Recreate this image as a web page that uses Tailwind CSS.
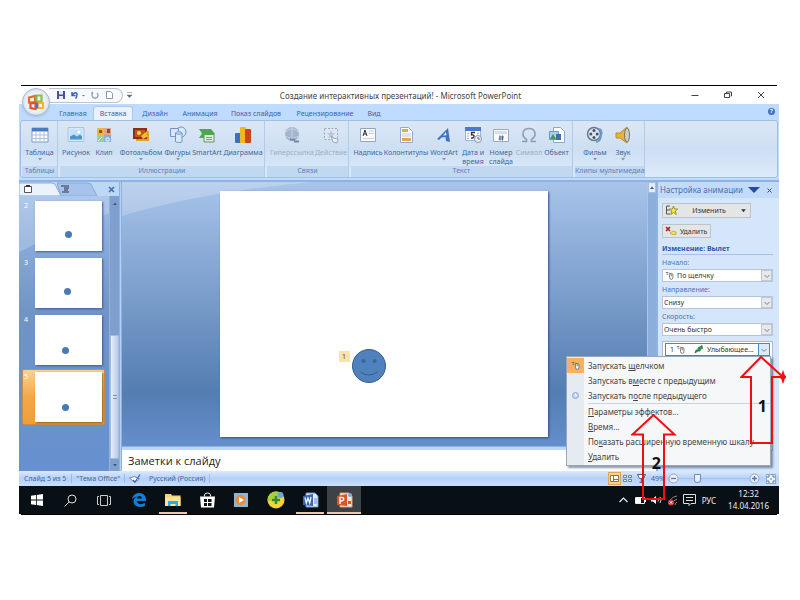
<!DOCTYPE html>
<html lang="ru">
<head>
    <meta charset="UTF-8">
    <meta name="viewport" content="width=device-width, initial-scale=1.0">
    <title>Создание интерактивных презентаций! - Microsoft PowerPoint</title>
    <script src="https://cdn.jsdelivr.net/npm/@tailwindcss/browser@4"></script>
    <style>
        body { font-family: 'Noto Sans', 'Open Sans', sans-serif; }
        .zoom-slider::-webkit-slider-thumb { appearance: none; width: 7px; height: 9px; background: #e8f1fd; border: 1px solid #6d8fc0; border-radius: 1px 1px 4px 4px; }
        .zoom-slider::-webkit-slider-runnable-track { background: linear-gradient(#a3c1ea, #a3c1ea) center / 100% 1px no-repeat; }
    </style>
</head>
<body class="bg-white min-h-screen pt-[85px] pl-[19px] pr-[21px]">

    <svg class="hidden">
        <symbol id="i-mouse" viewBox="0 0 12 10">
            <path d="M1 1.500h3M2 3.500h2M5 2l2 1" stroke="#555" fill="none"/>
            <rect x="5.500" y="2.500" width="4" height="7" rx="1.800" fill="#fff" stroke="#666"/>
            <path d="M7.500 3v3" stroke="#666"/>
        </symbol>
        <symbol id="i-chev" viewBox="0 0 8 8"><path d="M1.500 3l2.500 2.500L6.500 3" fill="none" stroke="#7b828e"/></symbol>
        <symbol id="i-drop" viewBox="0 0 6 4"><path d="M1 1h4L3 3.500z" fill="currentColor"/></symbol>
    </svg>

    <div class="relative text-[7px] leading-[9px]">
        <div class="h-px mx-[2px] bg-black"></div>

        <!-- title bar -->
        <header class="relative flex items-center h-[18px] bg-white">
            <button aria-label="Office" class="absolute left-[3px] top-[2px] z-10 size-[28px] rounded-full border border-[#a9b7cc] bg-radial from-white via-[#eef2f8] to-[#bccbe0] shadow flex items-center justify-center">
                <svg class="size-[22px]" viewBox="0 0 22 22" fill="none" stroke-width="2.200">
                    <path d="M4 6.500l6-1.500v6l-6 .5z" stroke="#e5682c"/>
                    <path d="M11.500 4.500h5v6h-5z" stroke="#8fbb45"/>
                    <path d="M5.500 12.500l5-.5v6l-5-1z" stroke="#d9562b"/>
                    <path d="M13 12h5v5h-5z" stroke="#f2b632"/>
                    <path d="M12 11.500v6" stroke="#3e7cc7"/>
                </svg>
            </button>
            <div class="ml-[30px] w-[74px] h-[15px] flex items-center gap-[9px] pl-[8px] border border-l-0 border-[#b9c3d2] rounded-r-full bg-[#f7f9fc]">
                <svg class="size-[8px]" viewBox="0 0 8 8"><path d="M0 0h8v8H0z" fill="#4552a0"/><path d="M2 0h4v3.500H2zM2 5h4v3H2z" fill="#e6e9f6"/></svg>
                <svg class="w-[14px] h-[8px] -ml-[3px]" viewBox="0 0 14 8"><path d="M1 1v3.500h3.500M1.500 4C3 1 6 1 6 3.500S5 7 4.500 7.500" fill="none" stroke="#3c62b4" stroke-width="1.500"/><path d="M11 4h3l-1.500 1.500z" fill="#777"/></svg>
                <svg class="size-[8px] -ml-[3px]" viewBox="0 0 8 8"><path d="M2 1.500h-1v2.500M2 2a3 3 0 1 0 4 0" fill="none" stroke="#8ea0ba" stroke-width="1.300"/></svg>
                <svg class="w-[7px] h-[8px] -ml-[2px]" viewBox="0 0 7 8"><path d="M.5.500h4L6.500 2.500v5h-6z" fill="#fff" stroke="#8b97ab"/></svg>
            </div>
            <svg class="ml-[4px] w-[5px] h-[6px] text-[#5c6b84]" viewBox="0 0 5 6"><path d="M0 .5h5M0 3h5L2.500 5.500z" fill="currentColor" stroke="currentColor" stroke-width=".5"/></svg>
            <h1 class="grow text-center text-[8px] leading-[10px] text-[#444] pr-[22px] pt-[2px]">Создание интерактивных презентаций! - Microsoft PowerPoint</h1>
            <div class="flex gap-[25px] pr-[14px] text-[#444]">
                <button aria-label="Свернуть"><svg class="size-[8px]" viewBox="0 0 8 8"><path d="M.5 4.500h7" stroke="currentColor"/></svg></button>
                <button aria-label="Развернуть"><svg class="size-[8px]" viewBox="0 0 8 8" fill="none" stroke="currentColor"><path d="M.5 2.500h5v4h-5zM2.500 2V1h5v4h-1"/></svg></button>
                <button aria-label="Закрыть"><svg class="size-[8px]" viewBox="0 0 8 8"><path d="M1 1l6 6M7 1L1 7" stroke="currentColor"/></svg></button>
            </div>
        </header>

        <!-- ribbon tabs -->
        <nav class="flex items-end h-[16px] bg-[#bfdbff] pl-[34px] text-[#4463a0]">
            <button class="w-[40px] h-[14px]">Главная</button>
            <button class="w-[40px] h-[14px] rounded-t-[3px] border border-b-0 border-[#a9c6ee] bg-[#e9f2fd]">Вставка</button>
            <button class="w-[44px] h-[14px]">Дизайн</button>
            <button class="w-[46px] h-[14px]">Анимация</button>
            <button class="w-[66px] h-[14px]">Показ слайдов</button>
            <button class="w-[72px] h-[14px]">Рецензирование</button>
            <button class="w-[26px] h-[14px]">Вид</button>
            <button aria-label="Справка" class="ml-auto mr-[4px] mb-[5px] size-[7px] rounded-full bg-[#3f74c4] text-white text-[6px] leading-[7px] font-bold">?</button>
        </nav>

        <!-- ribbon -->
        <div class="h-[60px] bg-[#bfdbff] px-[1px] pb-[2px]">
            <div class="flex gap-[2px] h-full pl-px rounded-[3px] border border-[#9fbfe8] bg-linear-to-b from-[#dce7f5] via-[#cddff3] to-[#dcebfb] text-[#46659e]">
                <section class="w-[36px] flex flex-col border-r border-[#b3cbe9]">
                    <div class="grow flex">
                        <button class="w-[36px] flex flex-col items-center pt-[5px] whitespace-nowrap">
                            <svg class="size-[18px]" viewBox="0 0 18 18"><path d="M1 2h16v14H1z" fill="#fff" stroke="#7f9ccb"/><path d="M1 2h16v3.500H1z" fill="#4a7ac6"/><path d="M1 9h16M1 12.500h16M5 5v11M9 5v11M13 5v11" stroke="#a9bfe0"/></svg>
                            <span class="mt-[4px]">Таблица</span>
                            <svg class="w-[6px] h-[4px] text-[#7f93b8]"><use href="#i-drop"/></svg>
                        </button>
                    </div>
                    <h2 class="h-[11px] text-center leading-[10px] bg-[#c1d8f1] text-[#5f80b8]">Таблицы</h2>
                </section>
                <section class="w-[205px] flex flex-col border-r border-[#b3cbe9]">
                    <div class="grow flex">
                        <button class="w-[32px] flex flex-col items-center pt-[5px] whitespace-nowrap">
                            <svg class="size-[18px]" viewBox="0 0 18 18"><path d="M1 1.500h16v14H1z" fill="#d5e8fb" stroke="#a9c3e4"/><path d="M3 3.500h12v10H3z" fill="#bfe0f8"/><path d="M3 13.500v-3l4-2 3 2 3-2 2 2v3z" fill="#4a94d0"/><circle cx="12" cy="6" r="1.500" fill="#fff"/></svg>
                            <span class="mt-[4px]">Рисунок</span>
                        </button>
                        <button class="w-[24px] flex flex-col items-center pt-[5px] whitespace-nowrap">
                            <svg class="size-[18px]" viewBox="0 0 18 18"><path d="M2 2h7v7H2z" fill="#f0b638"/><path d="M9 2h7v7H9z" fill="#d9ab8c"/><path d="M2 9h7v7H2z" fill="#9dcf8e"/><path d="M9 9h7v7H9z" fill="#83aee4"/><path d="M4 4h3v3H4zM12 3h3v4h-3z" fill="#9a4a2a"/><path d="M3 15l4-4M11 12h3v3h-3z" stroke="#e9f4ff" fill="none"/></svg>
                            <span class="mt-[4px]">Клип</span>
                        </button>
                        <button class="w-[50px] flex flex-col items-center pt-[5px] whitespace-nowrap">
                            <svg class="size-[18px]" viewBox="0 0 18 18"><path d="M4 5h13v10H4z" fill="#d9a22d"/><path d="M1 2h14v11H1z" fill="#8b2f10"/><path d="M3 4h10v7H3z" fill="#c5541c"/><circle cx="7" cy="7" r="2" fill="#f8dd4a"/><path d="M9 10l6-5v6l-4 2z" fill="#e9bf3a"/></svg>
                            <span class="mt-[4px]">Фотоальбом</span>
                            <svg class="w-[6px] h-[4px] text-[#7f93b8]"><use href="#i-drop"/></svg>
                        </button>
                        <button class="w-[23px] flex flex-col items-center pt-[5px] whitespace-nowrap">
                            <svg class="size-[18px]" viewBox="0 0 18 18" fill="#d9e9fa" stroke="#6b95cc"><circle cx="12" cy="6" r="5"/><path d="M1.500 2.500h8v8h-8z"/><path d="M6.500 7v8.500c0 1.300 6.500 1.300 6.500 0V7z"/><ellipse cx="9.750" cy="7" rx="3.250" ry="1.200"/></svg>
                            <span class="mt-[4px]">Фигуры</span>
                            <svg class="w-[6px] h-[4px] text-[#7f93b8]"><use href="#i-drop"/></svg>
                        </button>
                        <button class="w-[36px] flex flex-col items-center pt-[5px] whitespace-nowrap">
                            <svg class="size-[18px]" viewBox="0 0 18 18"><path d="M1 3h12l4 5-4 4H1l3-4.500z" fill="#4ea650"/><path d="M6 8.500h10v7.500H6z" fill="#dcefd9" stroke="#55a055"/><path d="M8 11.500h6M8 13.500h6" stroke="#6fae6e"/></svg>
                            <span class="mt-[4px]">SmartArt</span>
                        </button>
                        <button class="w-[36px] flex flex-col items-center pt-[5px] whitespace-nowrap">
                            <svg class="size-[18px]" viewBox="0 0 18 18"><rect x="1" y="7" width="6" height="10" rx="1" fill="#3c6fc0"/><rect x="6" y="1" width="6" height="16" rx="1" fill="#f2b824"/><rect x="11" y="3" width="6" height="14" rx="1" fill="#cc4426"/></svg>
                            <span class="mt-[4px]">Диаграмма</span>
                        </button>
                    </div>
                    <h2 class="h-[11px] text-center leading-[10px] bg-[#c1d8f1] text-[#5f80b8]">Иллюстрации</h2>
                </section>
                <section class="w-[82px] flex flex-col border-r border-[#b3cbe9]">
                    <div class="grow flex text-[#a0aec3]">
                        <button class="w-[50px] flex flex-col items-center pt-[5px] whitespace-nowrap">
                            <svg class="size-[18px]" viewBox="0 0 18 18"><circle cx="9" cy="8" r="7" fill="#a3b4cf"/><path d="M3 6c3-4 9-4 12 0M3 10c4 3 8 3 12 0M9 1v13" fill="none" stroke="#c9d5e6"/><path d="M7 13.500h5M11 15.500h5" stroke="#7787a1" stroke-width="2"/></svg>
                            <span class="mt-[4px]">Гиперссылка</span>
                        </button>
                        <button class="w-[28px] flex flex-col items-center pt-[5px] whitespace-nowrap">
                            <svg class="size-[18px]" viewBox="0 0 18 18"><path d="M2.500 2.500h13v11h-13z" fill="#dde6f2" stroke="#9aabc4" stroke-dasharray="2 1.500"/><path d="M9 4l1.200 3 3 .2-2.400 2 .8 3L9 10.500 6.400 12.200l.8-3-2.400-2 3-.2z" fill="#b9c6da"/><path d="M9 10l2 6 4 1 1-4-5-1z" fill="#eef2f8" stroke="#9aabc4"/></svg>
                            <span class="mt-[4px]">Действие</span>
                        </button>
                    </div>
                    <h2 class="h-[11px] text-center leading-[10px] bg-[#c1d8f1] text-[#5f80b8]">Связи</h2>
                </section>
                <section class="w-[222px] flex flex-col border-r border-[#b3cbe9]">
                    <div class="grow flex">
                        <button class="w-[34px] flex flex-col items-center pt-[5px] whitespace-nowrap">
                            <svg class="size-[18px]" viewBox="0 0 18 18"><path d="M1.500 2.500h15v13h-15z" fill="#f8fafd" stroke="#93a5c0"/><path d="M4 10l2-6 2 6M4.800 8h2.500" fill="none" stroke="#333"/><path d="M10 5h5M10 7.500h5M4 12.500h11" stroke="#c5d0e0"/></svg>
                            <span class="mt-[4px]">Надпись</span>
                        </button>
                        <button class="w-[42px] flex flex-col items-center pt-[5px] whitespace-nowrap">
                            <svg class="size-[18px]" viewBox="0 0 18 18"><path d="M3.500 1.500h8l4 4v11h-12z" fill="#fff" stroke="#92a9cb"/><path d="M5 3h6v3H5zM5 12h9v3H5z" fill="#eba348"/><path d="M5 8h9M5 10h9" stroke="#b9c8de"/></svg>
                            <span class="mt-[4px]">Колонтитулы</span>
                        </button>
                        <button class="w-[34px] flex flex-col items-center pt-[5px] whitespace-nowrap">
                            <svg class="size-[18px]" viewBox="0 0 18 18"><path d="M2 13L13 2l2 14-4-1-.5-4-4 .5L4 14z" fill="#3c74c4"/><path d="M8 9.500L11 6l.5 3.300z" fill="#dce9f8"/></svg>
                            <span class="mt-[4px]">WordArt</span>
                            <svg class="w-[6px] h-[4px] text-[#7f93b8]"><use href="#i-drop"/></svg>
                        </button>
                        <button class="w-[24px] flex flex-col items-center pt-[5px]">
                            <svg class="size-[18px] shrink-0" viewBox="0 0 18 18"><path d="M1.500 1.500h15v13h-15z" fill="#f7fafe" stroke="#9db2d2"/><path d="M1 1h16v4H1z" fill="#4a7ac6"/><path d="M11 6.500H7.500V9C11 8 11 12.500 7 12" fill="none" stroke="#333" stroke-width="1.300"/><path d="M3 7.500h2M3 10h2M3 12.500h2M13 7.500h2" stroke="#a9b9d2"/><circle cx="14" cy="13" r="3.500" fill="#e9eef5" stroke="#8797b0"/><path d="M14 11v2h2" fill="none" stroke="#667"/></svg>
                            <span class="mt-[4px] whitespace-nowrap">Дата и<br>время</span>
                        </button>
                        <button class="w-[32px] flex flex-col items-center pt-[5px]">
                            <svg class="size-[18px] shrink-0" viewBox="0 0 18 18"><path d="M1.500 3.500h15v12h-15z" fill="#f8fafd" stroke="#9aaac3"/><path d="M3 5h12v3H3z" fill="#d4deec"/><path d="M8 9.500v5M10.500 9.500v5M7 11h5M6.500 13h5" stroke="#54698e"/></svg>
                            <span class="mt-[4px]">Номер слайда</span>
                        </button>
                        <button class="w-[24px] flex flex-col items-center pt-[5px] whitespace-nowrap text-[#a0aec3]">
                            <svg class="size-[18px]" viewBox="0 0 18 18"><path d="M2 15.500h4.500v-2C1 10 2 2.500 9 2.500s8 7.500 2.500 11v2H16" fill="none" stroke="#8e9db6" stroke-width="1.600"/></svg>
                            <span class="mt-[4px]">Символ</span>
                        </button>
                        <button class="w-[31px] flex flex-col items-center pt-[5px] whitespace-nowrap">
                            <svg class="size-[18px]" viewBox="0 0 18 18"><path d="M5.500 1.500h7l4 4v11h-11z" fill="#f8fbff" stroke="#8ea6ca"/><path d="M1.500 5.500h9v8h-9z" fill="#a9cdf0" stroke="#7596c4"/><path d="M2 13l3-5 3 5z" fill="#3f9a4a"/><path d="M8 8h5v6H8z" fill="#3e6fae"/></svg>
                            <span class="mt-[4px]">Объект</span>
                        </button>
                    </div>
                    <h2 class="h-[11px] text-center leading-[10px] bg-[#c1d8f1] text-[#5f80b8]">Текст</h2>
                </section>
                <section class="w-[70px] flex flex-col border-r border-[#b3cbe9]">
                    <div class="grow flex">
                        <button class="w-[40px] flex flex-col items-center pt-[5px] whitespace-nowrap">
                            <svg class="size-[18px]" viewBox="0 0 18 18"><circle cx="8" cy="8" r="6.500" fill="#dbe2ec" stroke="#6b7990" stroke-width="1.500"/><g fill="#46546b"><circle cx="8" cy="4.500" r="1.500"/><circle cx="4.800" cy="8" r="1.500"/><circle cx="11.200" cy="8" r="1.500"/><circle cx="8" cy="11.500" r="1.500"/></g><path d="M12 3c4 0 4 4 3 7s0 5-5 6" fill="none" stroke="#6b9bcb" stroke-width="2"/></svg>
                            <span class="mt-[4px]">Фильм</span>
                            <svg class="w-[6px] h-[4px] text-[#7f93b8]"><use href="#i-drop"/></svg>
                        </button>
                        <button class="w-[16px] flex flex-col items-center pt-[5px] whitespace-nowrap">
                            <svg class="size-[18px] shrink-0" viewBox="0 0 18 18"><path d="M2 7h4l7-6v16l-7-5H2z" fill="#e8b23c" stroke="#c08d30"/><ellipse cx="13" cy="9" rx="2.500" ry="7" fill="#c3ccd9" stroke="#8a7440"/></svg>
                            <span class="mt-[4px]">Звук</span>
                            <svg class="w-[6px] h-[4px] shrink-0 text-[#7f93b8]"><use href="#i-drop"/></svg>
                        </button>
                    </div>
                    <h2 class="h-[11px] text-center leading-[10px] bg-[#c1d8f1] text-[#5f80b8] whitespace-nowrap">Клипы мультимедиа</h2>
                </section>
            </div>
        </div>

        <!-- work area -->
        <div class="flex h-[291px] border-t-2 border-[#8fb2e0]">

            <aside class="relative w-[100px] flex flex-col bg-linear-to-b from-[#a0bfe9] via-[#7094c7] via-45% to-[#6690d0]">
                <svg class="absolute inset-0 w-full h-[72px]" viewBox="0 0 100 72" preserveAspectRatio="none"><path d="M0 0h100v28Q50 44 0 70z" fill="#fff" fill-opacity=".2"/></svg>
                <div class="relative flex items-center h-[14px] bg-[#bfd7f7]">
                    <button aria-label="Слайды" class="relative w-[42px] h-[14px]">
                        <svg class="w-[42px] h-[14px]" viewBox="0 0 42 14"><path d="M0 1h33q3 0 4 3l5 10H0z" fill="#e9f2fd" stroke="#87a9d8"/><path d="M5.500 4.500h7v6h-7z" fill="#fff" stroke="#555"/><path d="M7 4h4" stroke="#333" stroke-width="2"/></svg>
                    </button>
                    <button aria-label="Структура" class="-ml-[4px] w-[41px] h-[14px]">
                        <svg class="w-[41px] h-[14px]" viewBox="0 0 41 14"><path d="M0 1h31q3 0 4 3l5 10H4z" fill="#a5c3ec" stroke="#87a9d8"/><path d="M4 4h8M7 6h5M7 8h4M5 10h7" stroke="#2d3748" stroke-width="1.200"/></svg>
                    </button>
                    <button aria-label="Закрыть" class="ml-auto mr-[4px]"><svg class="size-[7px]" viewBox="0 0 7 7"><path d="M1 1l5 5M6 1L1 6" stroke="#3f6ca8" stroke-width="1.500"/></svg></button>
                </div>
                <div class="relative grow flex">
                    <ol class="grow pt-[2px] pl-[3px] text-[7px] text-white">
                        <li class="flex h-[57px] w-[83px] pt-[3px] pl-[2px] gap-[6px]"><span class="w-[5px]">2</span><div class="relative w-[67px] h-[50px] bg-white shadow-[1px_1px_2px_#3f5f92]"><i class="absolute left-[30px] top-[30px] size-[7px] rounded-full bg-[#4a7ab5]"></i></div></li>
                        <li class="flex h-[57px] w-[83px] pt-[3px] pl-[2px] gap-[6px]"><span class="w-[5px]">3</span><div class="relative w-[67px] h-[50px] bg-white shadow-[1px_1px_2px_#3f5f92]"><i class="absolute left-[29px] top-[30px] size-[7px] rounded-full bg-[#4a7ab5]"></i></div></li>
                        <li class="flex h-[57px] w-[83px] pt-[3px] pl-[2px] gap-[6px]"><span class="w-[5px]">4</span><div class="relative w-[67px] h-[50px] bg-white shadow-[1px_1px_2px_#3f5f92]"><i class="absolute left-[27px] top-[32px] size-[7px] rounded-full bg-[#4a7ab5]"></i></div></li>
                        <li class="flex h-[56px] w-[83px] pt-[2px] pl-px gap-[6px] bg-linear-to-b from-[#fbd190] via-[#f2a844] to-[#ef9f38] border border-[#c98b4a] rounded-[2px]"><span class="w-[5px]">5</span><div class="relative w-[67px] h-[50px] bg-white shadow-[1px_1px_2px_#8a5a20]"><i class="absolute left-[27px] top-[32px] size-[7px] rounded-full bg-[#4a7ab5]"></i></div></li>
                    </ol>
                    <div class="w-[10px] flex flex-col items-center bg-[#7f9fcd] border-l border-[#94b2de]">
                        <svg class="w-[6px] h-[4px] mt-[6px] rotate-180 text-[#3b5785]"><use href="#i-drop"/></svg>
                        <div class="mt-auto w-[9px] h-[124px] flex items-center justify-center bg-linear-to-r from-[#e6eef9] to-[#b9cbe6] border border-[#a4bad9]"><span class="w-[4px] h-[4px] border-y border-[#7f93b3]"></span></div>
                        <svg class="w-[6px] h-[4px] my-[4px] text-[#3b5785]"><use href="#i-drop"/></svg>
                    </div>
                </div>
            </aside>

            <div class="w-[3px] bg-[#b4d0f6] border-x border-[#8fb0e0]"></div>

            <main class="grow flex flex-col">
                <div class="relative grow flex">
                    <div class="relative grow flex justify-center pt-[9px] pr-[2px] bg-linear-to-b from-[#a8c4ea] via-[#547db1] via-80% to-[#658fcb]">
                        <svg class="absolute inset-x-0 top-0 w-full h-[34px]" viewBox="0 0 524 34" preserveAspectRatio="none"><path d="M0 0h190Q80 10 0 34z" fill="#fff" fill-opacity=".22"/></svg>
                        <div class="relative w-[328px] h-[246px] bg-white shadow-[1px_1px_2px_#2e4f80]">
                            <span class="absolute left-[119px] top-[160px] w-[11px] h-[11px] text-center text-[7px] leading-[11px] text-[#554a30] bg-[#fbe3a4]">1</span>
                            <svg class="absolute left-[131px] top-[157px] size-[36px]" viewBox="0 0 36 36"><circle cx="18" cy="18" r="16.500" fill="#4f81bd" stroke="#385d8a"/><circle cx="12.500" cy="13" r="2" fill="#3c649a"/><circle cx="23.500" cy="13" r="2" fill="#3c649a"/><path d="M9.500 24q8.500 6 17 0" fill="none" stroke="#385d8a"/></svg>
                        </div>
                    </div>
                    <div class="w-[9px] bg-[#8caedd] border-l border-[#a9c6ee]">
                        <div class="h-[11px] flex items-center justify-center bg-[#e1ebf9] border border-[#a5bddf]"><svg class="w-[6px] h-[4px] rotate-180 text-[#3b5785]"><use href="#i-drop"/></svg></div>
                    </div>
                </div>
                <div class="h-[4px] bg-[#bcd6f8] border-t border-[#8fb0e0]"></div>
                <textarea aria-label="Заметки" class="block w-full h-[21px] resize-none overflow-hidden bg-white pl-[6px] pt-[3px] font-['Open_Sans'] text-[11px] leading-[15px] text-[#222]">Заметки к слайду</textarea>
            </main>

            <!-- task pane -->
            <aside class="w-[123px] flex flex-col border-l-2 border-[#8fb2e0] bg-[#d5e5fa] text-[#333]">
                <div class="flex items-center h-[16px] pl-[2px] pr-[7px] bg-[#c3dbfa] text-[#4a70ad]">
                    <h2 class="text-[8px] leading-[12px] whitespace-nowrap">Настройка анимации</h2>
                    <svg class="ml-auto w-[12px] h-[6px]" viewBox="0 0 12 6"><path d="M0 0h12L6 6z" fill="#1f4f9c"/></svg>
                    <button aria-label="Закрыть" class="ml-[7px]"><svg class="size-[5px]" viewBox="0 0 5 5"><path d="M.5.500l4 4M4.500.500l-4 4" stroke="#2d5596"/></svg></button>
                </div>
                <div class="pl-[4px] pr-[6px] pt-[5px] flex flex-col">
                    <button class="w-[89px] h-[15px] flex items-center px-[3px] border border-[#bdc3cb] bg-[#e4e5e7]">
                        <svg class="w-[12px] h-[11px]" viewBox="0 0 12 11"><path d="M4 1H.5v8H4M1 5h3" fill="none" stroke="#555"/><path d="M7.500 1l1.200 3h3L9.300 6l1 3.500L7.500 7.500 4.700 9.500l1-3.500L3.500 4h2.800z" fill="#f6ec2e" stroke="#77701c" stroke-width=".7"/></svg>
                        <span class="grow text-center">Изменить</span>
                        <svg class="w-[7px] h-[5px]"><use href="#i-drop"/></svg>
                    </button>
                    <button class="mt-[6px] w-[49px] h-[14px] flex items-center gap-[3px] px-[2px] border border-[#bdc3cb] bg-[#e4e5e7]">
                        <svg class="w-[12px] h-[10px]" viewBox="0 0 12 10"><path d="M1 1l4 4M5 1L1 5" stroke="#a31c1c" stroke-width="1.500"/><path d="M5 7l3-2 3 1v2.500H7z" fill="#f3e445" stroke="#9c9430" stroke-width=".6"/></svg>
                        <span>Удалить</span>
                    </button>
                    <h3 class="mt-[6px] h-[11px] border-b border-[#a3c0ea] font-bold text-[#2d5aa0]">Изменение: Вылет</h3>
                    <label for="start" class="mt-[3px] text-[#5274ae]">Начало:</label>
                    <div class="relative mt-[2px]">
                        <select id="start" class="appearance-none block w-full h-[13px] bg-white border border-[#b3c5df] pl-[14px]"><option>По щелчку</option></select>
                        <svg class="absolute left-[3px] top-[2px] w-[10px] h-[9px] pointer-events-none"><use href="#i-mouse"/></svg>
                        <span class="absolute right-px top-px w-[11px] h-[11px] flex items-center justify-center bg-[#e6e8eb] border border-[#c3c8cf] pointer-events-none"><svg class="size-[8px]"><use href="#i-chev"/></svg></span>
                    </div>
                    <label for="dir" class="mt-[3px] text-[#5274ae]">Направление:</label>
                    <div class="relative mt-[2px]">
                        <select id="dir" class="appearance-none block w-full h-[13px] bg-white border border-[#b3c5df] pl-[1px]"><option>Снизу</option></select>
                        <span class="absolute right-px top-px w-[11px] h-[11px] flex items-center justify-center bg-[#e6e8eb] border border-[#c3c8cf] pointer-events-none"><svg class="size-[8px]"><use href="#i-chev"/></svg></span>
                    </div>
                    <label for="speed" class="mt-[3px] text-[#5274ae]">Скорость:</label>
                    <div class="relative mt-[2px]">
                        <select id="speed" class="appearance-none block w-full h-[13px] bg-white border border-[#b3c5df] pl-[1px]"><option>Очень быстро</option></select>
                        <span class="absolute right-px top-px w-[11px] h-[11px] flex items-center justify-center bg-[#e6e8eb] border border-[#c3c8cf] pointer-events-none"><svg class="size-[8px]"><use href="#i-chev"/></svg></span>
                    </div>
                    <div class="mt-[5px] h-[110px] bg-white border border-[#a9bcd8] px-[2px] pt-px">
                        <button class="w-full h-[13px] flex items-center pl-[4px] border border-[#3f8bd0] bg-white">
                            <span>1</span>
                            <svg class="ml-[2px] w-[10px] h-[9px]"><use href="#i-mouse"/></svg>
                            <svg class="ml-[8px] w-[9px] h-[9px]" viewBox="0 0 9 9"><path d="M1 8l1-3 2 0 0-2 4-2.500.5 3-2 .5-.5 2-2 0z" fill="#2f9a62" stroke="#1f5f3d" stroke-width=".7"/></svg>
                            <span class="ml-[4px]">Улыбающее...</span>
                            <span class="ml-auto w-[11px] h-full flex items-center justify-center bg-[#dcebfb] border-l border-[#3f8bd0]"><svg class="size-[8px]"><use href="#i-chev"/></svg></span>
                        </button>
                    </div>
                </div>
            </aside>
        </div>

        <!-- status bar -->
        <footer class="flex items-center h-[15px] bg-linear-to-b from-[#dbe9fc] via-[#b5d1f8] to-[#c9dffb] text-[#46659e]">
            <span class="pl-[5px] pr-[5px]">Слайд 5 из 5</span>
            <span class="px-[4px] border-x border-[#9dbbe6]">"Тема Office"</span>
            <svg class="ml-[4px] w-[12px] h-[10px]" viewBox="0 0 12 10"><path d="M.5 4l5-1.500 5 2.500-5 3.500z" fill="#fff" stroke="#7b8aa6"/><path d="M4 6l2 2 5-7.500" fill="none" stroke="#4668a8" stroke-width="1.300"/></svg>
            <span class="ml-[8px] pr-[4px] border-r border-[#9dbbe6]">Русский (Россия)</span>
            <div class="ml-auto flex items-center">
                <button aria-label="Обычный" class="w-[13px] h-[13px] flex items-center justify-center border border-[#dda75a] bg-[#fbd48a]"><svg class="size-[9px]" viewBox="0 0 9 9" fill="#fff" stroke="#8a7345"><path d="M.5 1.500h8v6h-8zM3.500 1.500v6M3.500 5.500h5"/></svg></button>
                <button aria-label="Сортировщик" class="w-[13px] flex justify-center"><svg class="size-[9px]" viewBox="0 0 9 9" fill="#fff" stroke="#6480ac"><path d="M.5 1.500h3v2h-3zM5.500 1.500h3v2h-3zM.5 5.500h3v2h-3zM5.500 5.500h3v2h-3z"/></svg></button>
                <button aria-label="Показ" class="w-[14px] flex justify-center"><svg class="size-[9px]" viewBox="0 0 9 9"><path d="M.5.500h8L6.500 4.500h-4z" fill="#fff" stroke="#4b6288"/><path d="M4.500 5v3M2.500 8.500h4" stroke="#4b6288" stroke-width="1.300"/></svg></button>
                <span class="w-[20px] text-center">49%</span>
                <svg class="size-[11px]" viewBox="0 0 11 11"><circle cx="5.500" cy="5.500" r="4.500" fill="#e6effb" stroke="#8fa5c8"/><path d="M3 5.500h5" stroke="#5d779f" stroke-width="1.300"/></svg>
                <input type="range" aria-label="Масштаб" value="24" class="zoom-slider appearance-none bg-transparent w-[70px] h-[9px]">
                <svg class="size-[11px]" viewBox="0 0 11 11"><circle cx="5.500" cy="5.500" r="4.500" fill="#e6effb" stroke="#8fa5c8"/><path d="M3 5.500h5M5.500 3v5" stroke="#5d779f" stroke-width="1.300"/></svg>
                <svg class="ml-[6px] mr-[3px] size-[10px]" viewBox="0 0 10 10"><path d="M.5.500h9v9h-9z" fill="#eef4fd" stroke="#8ba3c9"/><path d="M2 4V2h2M6 2h2v2M8 6v2H6M4 8H2V6M4 5h2" fill="none" stroke="#5b76a5"/></svg>
            </div>
        </footer>

        <!-- Windows taskbar -->
        <div class="flex items-stretch h-[28px] bg-[#081015] pl-px text-[#eee]">
            <button aria-label="Пуск" class="w-[34px] flex items-center justify-center"><svg class="size-[12px]" viewBox="0 0 12 12" fill="#fff"><path d="M0 1.700l5-.7v4.600H0zM5.800.900L12 0v5.600H5.800zM0 6.400h5V11l-5-.7zM5.800 6.400H12V12l-6.200-.9z"/></svg></button>
            <button aria-label="Поиск" class="w-[33px] flex items-center justify-center"><svg class="size-[13px]" viewBox="0 0 13 13" fill="none" stroke="#ddd"><circle cx="8" cy="5" r="4"/><path d="M5 8l-4.500 4.500"/></svg></button>
            <button aria-label="Представление задач" class="w-[34px] flex items-center justify-center"><svg class="w-[14px] h-[11px]" viewBox="0 0 14 11" fill="none" stroke="#ccc"><path d="M3.500.500h7v10h-7zM2 1.500H.5v8H2M12 1.500h1.500v8H12"/></svg></button>
            <button aria-label="Edge" class="w-[35px] flex items-center justify-center"><svg class="size-[14px]" viewBox="0 0 14 14"><path d="M0 6.500C.5 2.500 3.500 0 7.200 0 11.500 0 14 3 14 6.500V8H4.800c.1 2 1.700 3.200 3.900 3.200 1.600 0 3-.4 4.200-1.100v3C11.600 13.700 10 14 8.200 14 4.200 14 1.500 11.600 1.500 8.300 1.500 6 3 4.200 5.200 3.400 3.200 3.500 1.300 4.700 0 6.500zM4.900 5.600h5c0-1.500-.8-2.600-2.400-2.600S5 4.200 4.900 5.600z" fill="#1180d6"/></svg></button>
            <button aria-label="Проводник" class="relative w-[34px] flex items-center justify-center"><svg class="w-[16px] h-[14px]" viewBox="0 0 16 14"><path d="M0 1h6l1 1.500h8.500V13H0z" fill="#f5d571"/><path d="M0 4.500h15.500V13H0z" fill="#fae69b"/><path d="M3 13V8h10v5h-2.500v-2h-5v2z" fill="#35a8dd"/></svg><span class="absolute bottom-0 inset-x-[3px] h-[2px] bg-[#f3c7a5]"></span></button>
            <button aria-label="Магазин" class="w-[34px] flex items-center justify-center"><svg class="w-[15px] h-[16px]" viewBox="0 0 15 16"><path d="M4.500 4.500V3q0-2 3-2t3 2v1.500" fill="none" stroke="#eee"/><path d="M0 4.500h15l-1 11H1z" fill="#fff"/><path d="M4 7h3v3H4zM8 7h3.500v3H8zM4 11h3v3H4zM8 11h3.500v3H8z" fill="#111"/></svg></button>
            <button aria-label="Плеер" class="w-[34px] flex items-center justify-center"><svg class="size-[14px]" viewBox="0 0 14 14"><path d="M0 0h14v14H0z" fill="#8db5d6"/><circle cx="6.500" cy="7" r="5" fill="#ee8a33"/><path d="M5 4l5 3-5 3z" fill="#fff"/></svg></button>
            <button aria-label="360" class="w-[35px] flex items-center justify-center"><svg class="size-[18px]" viewBox="0 0 18 18"><circle cx="9" cy="9" r="8.500" fill="#f4d531"/><path d="M1 6a8.500 8.500 0 0 1 12-4.500L9 9 .6 10.500z" fill="#a9cf3e"/><path d="M9 5v8M5 9h8" stroke="#2f8a3a" stroke-width="2.500"/><circle cx="13.500" cy="4" r="3" fill="#6aa6d9"/></svg></button>
            <button aria-label="Word" class="relative w-[34px] flex items-center justify-center"><svg class="size-[17px]" viewBox="0 0 17 17"><path d="M4 1h9l3 3v11H4z" fill="#dce9f9" stroke="#6b91cd"/><path d="M1 4l10-2v12L1 13z" fill="#3765b4"/><path d="M3 5.500l1.300 5.500L6 6l1.700 5L9 5" fill="none" stroke="#fff" stroke-width="1.200"/><path d="M12 7h3M12 9h3M12 11h3" stroke="#6b91cd"/></svg><span class="absolute bottom-0 inset-x-[3px] h-[2px] bg-[#f3c7a5]"></span></button>
            <button aria-label="PowerPoint" class="relative w-[34px] flex items-center justify-center bg-[#3d4246]"><svg class="size-[17px]" viewBox="0 0 17 17"><path d="M4 1h9l3 3v11H4z" fill="#fbe6dc" stroke="#e29a78"/><path d="M1 4l10-2v12L1 13z" fill="#d8562b"/><path d="M4 12V5.500c5-1 5 4 0 3.500" fill="none" stroke="#fff" stroke-width="1.400"/><path d="M12 9h3v3h-3z" fill="#d8562b"/><circle cx="14" cy="3" r="2" fill="#7aa7dc"/></svg><span class="absolute bottom-0 inset-x-0 h-[2px] bg-[#f3c7a5]"></span></button>
            <div class="ml-auto flex items-center pr-[10px]">
                <svg class="w-[9px] h-[6px]" viewBox="0 0 9 6"><path d="M.5 5l4-4 4 4" fill="none" stroke="#eee" stroke-width="1.200"/></svg>
                <svg class="ml-[7px] w-[11px] h-[7px]" viewBox="0 0 11 7"><path d="M.5.500h9v6h-9z" fill="none" stroke="#eee"/><path d="M1 1h5v5H1zM10 2h1v3h-1z" fill="#fff"/></svg>
                <svg class="ml-[5px] w-[12px] h-[10px]" viewBox="0 0 12 10"><path d="M0 3.500h2L5 1v8L2 6.500H0z" fill="#fff"/><path d="M7 3.500q1 1.500 0 3M9 2q2 3 0 6" fill="none" stroke="#ccc"/></svg>
                <svg class="ml-[4px] w-[11px] h-[11px]" viewBox="0 0 11 11"><path d="M10 1Q3 2 2 9M10 4Q6 5 5 10M10 7Q8 8 8 10" fill="none" stroke="#888"/><circle cx="4" cy="7.500" r="3" fill="#d93636"/><path d="M2.800 6.300l2.400 2.400M5.200 6.300L2.800 8.700" stroke="#fff"/></svg>
                <svg class="ml-[5px] w-[13px] h-[12px]" viewBox="0 0 13 12"><path d="M.5.500h12v9H8l-2 2v-2H.5zM3 3.500h7M3 6.500h7" fill="none" stroke="#ddd"/></svg>
                <span class="ml-[6px] text-[8px]">РУС</span>
                <time class="ml-[12px] text-center text-[8px] leading-[12px]">12:32<br>14.04.2016</time>
            </div>
        </div>
        <div class="h-px mx-[2px] bg-black"></div>

        <!-- effect context menu -->
        <div role="menu" class="absolute right-[8px] bottom-[49px] w-[205px] py-px border border-[#9aa7ba] bg-linear-to-r from-[#e6ebf1] from-[17px] to-[#f6f7f8] to-[17px] shadow-[2px_2px_2px_rgba(30,50,90,.5)] text-[8px] leading-[15px] text-[#444] whitespace-nowrap">
            <button role="menuitem" class="flex w-full h-[15px] items-center"><span class="w-[17px] h-full mr-[4px] flex items-center justify-center bg-[#f6b25c]"><svg class="w-[10px] h-[9px]"><use href="#i-mouse"/></svg></span><span>Запускать <u>щ</u>елчком</span></button>
            <button role="menuitem" class="flex w-full h-[15px] items-center pl-[21px]"><span>Запускать в<u>м</u>есте с предыдущим</span></button>
            <button role="menuitem" class="flex w-full h-[15px] items-center"><span class="w-[17px] mr-[4px] flex justify-center"><svg class="size-[7px]" viewBox="0 0 7 7"><circle cx="3.500" cy="3.500" r="3" fill="#c5d8f0" stroke="#8aa6cf"/><path d="M3.500 1.500v2h1.500" fill="none" stroke="#f4f8fd"/></svg></span><span>Запускать п<u>о</u>сле предыдущего</span></button>
            <hr class="ml-[21px] border-[#c3d6ec]">
            <button role="menuitem" class="flex w-full h-[15px] items-center pl-[21px]"><span><u>П</u>араметры эффектов...</span></button>
            <button role="menuitem" class="flex w-full h-[15px] items-center pl-[21px]"><span><u>В</u>ремя...</span></button>
            <button role="menuitem" class="flex w-full h-[15px] items-center pl-[21px]"><span>По<u>к</u>азать расширенную временную шкалу</span></button>
            <button role="menuitem" class="flex w-full h-[15px] items-center pl-[21px]"><span><u>У</u>далить</span></button>
        </div>

        <!-- callout arrows -->
        <svg class="absolute -right-[7px] top-[270px] w-[46px] h-[90px]" viewBox="0 0 46 90" fill="none" stroke="#f20d12" stroke-width="2"><path d="M21 2L1.500 22H11v66h21V22h11z"/><path d="M43 18l1 3 2 1-2 1-1 3-1-3-2-1 2-1z" fill="#f20d12"/></svg>
        <span class="absolute right-[12px] top-[311px] text-[16px] leading-[20px] font-bold text-[#111] font-['Open_Sans']">1</span>
        <svg class="absolute right-[102px] top-[328px] w-[46px] h-[90px]" viewBox="0 0 46 90" fill="none" stroke="#f20d12" stroke-width="2"><path d="M22.500 2L1.500 21.500H12V86h21V21.500h10.500z"/></svg>
        <span class="absolute right-[118px] top-[368px] text-[16px] leading-[20px] font-bold text-[#111] font-['Open_Sans']">2</span>
    </div>

</body>
</html>
